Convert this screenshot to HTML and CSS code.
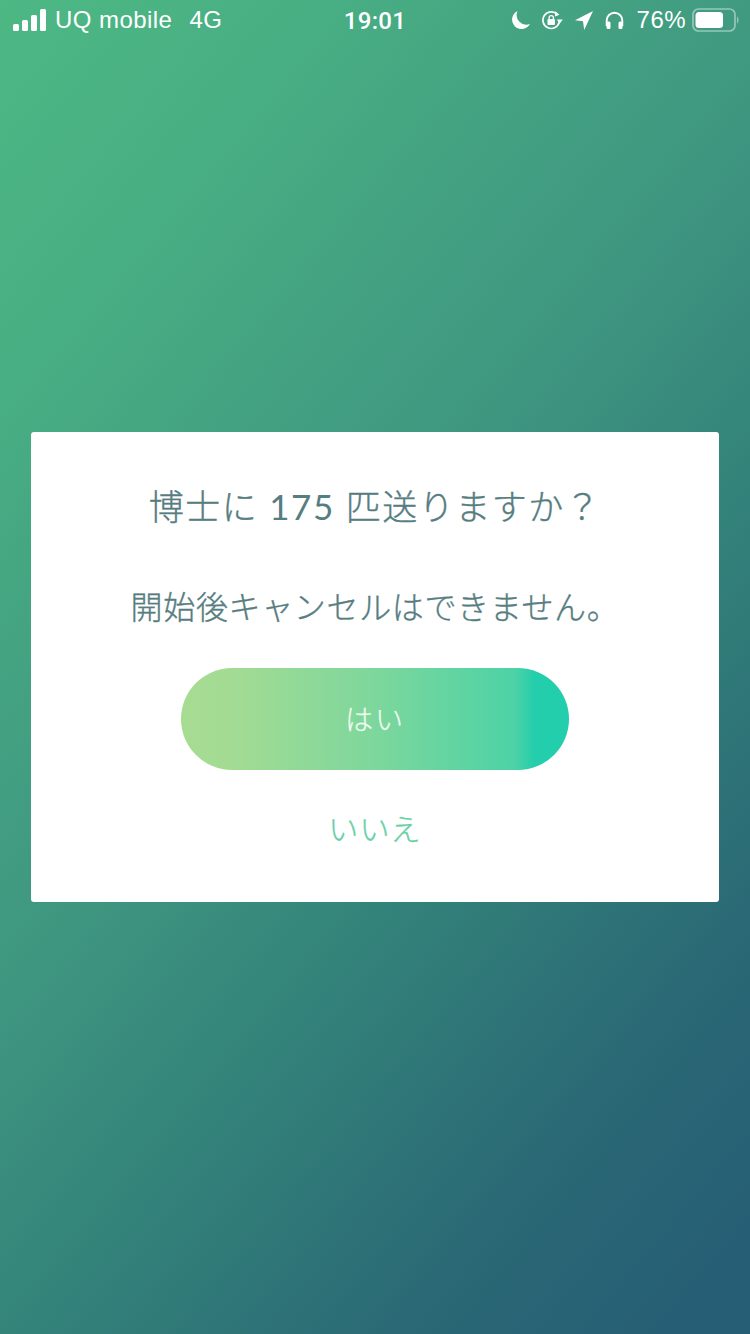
FILE: index.html
```html
<!DOCTYPE html>
<html lang="ja">
<head>
<meta charset="utf-8">
<title>確認</title>
<link rel="stylesheet" href="styles.css">
</head>
<body>
<div class="status">
  <div class="status-left">
    <svg class="signal" width="34" height="22" viewBox="0 0 34 22"><rect x="0" y="15" width="6" height="7" rx="1.5"/><rect x="9" y="11" width="6" height="11" rx="1.5"/><rect x="18" y="6" width="6" height="16" rx="1.5"/><rect x="27" y="0" width="6" height="22" rx="1.5"/></svg>
    <span class="carrier">UQ mobile</span>
    <span class="net">4G</span>
  </div>
  <div class="status-time">19:01</div>
  <div class="status-right">
    <svg width="19" height="19" viewBox="0 0 19 19"><path d="M6.500 0A9.500 9.500 0 1 0 19 13 9.800 9.800 0 0 1 6.500 0Z" fill="#fff"/></svg>
    <svg width="21" height="19" viewBox="0 0 21 19"><path d="M15 3.200A8.300 8.300 0 1 0 17.300 11" fill="none" stroke="#fff" stroke-width="1.700"/><path d="M13.200 .2 17.500 3.800 13 5.500Z M14.800 8.600H20.800L17.600 12.800Z" fill="#fff"/><rect x="5.500" y="8" width="7.500" height="6" rx="1" fill="#fff"/><path d="M7.100 8V6.800a2.150 2.150 0 0 1 4.300 0V8" fill="none" stroke="#fff" stroke-width="1.300"/></svg>
    <svg width="18" height="19" viewBox="0 0 18 19"><path d="M18 0 0 9.200 8 10.300 9.200 19Z" fill="#fff"/></svg>
    <svg width="19" height="18" viewBox="0 0 19 18"><path d="M1.700 15V9.500a7.800 7.800 0 0 1 15.600 0V15" fill="none" stroke="#fff" stroke-width="1.900"/><rect x="1.500" y="10.500" width="4" height="7.500" rx="1.500" fill="#fff"/><rect x="13.500" y="10.500" width="4" height="7.500" rx="1.500" fill="#fff"/></svg>
    <span class="pct">76%</span>
    <svg class="battery" width="47" height="24" viewBox="0 0 47 24"><rect x="1" y="1" width="42" height="22" rx="5.500" fill="none" stroke="#fff" stroke-opacity=".45" stroke-width="1.700"/><rect x="3.500" y="4" width="27.500" height="16" rx="3.500" fill="#fff"/><path d="M45 8.500c1 .5 1.500 2 1.500 3.500s-.5 3-1.500 3.500Z" fill="#fff" fill-opacity=".45"/></svg>
  </div>
</div>
<main class="screen">
  <section class="card">
    <h1 class="title">博士に <span class="num">175</span> 匹送りますか？</h1>
    <p class="note">開始後キャンセルはできません。</p>
    <button class="yes" type="button">はい</button>
    <button class="no" type="button">いいえ</button>
  </section>
</main>
</body>
</html>
```
FILE: styles.css
```css
* { box-sizing: border-box; }
html, body { margin: 0; height: 100%; }
body {
  width: 750px;
  height: 1334px;
  overflow: hidden;
  position: relative;
  font-family: Lato, "Noto Sans CJK JP", sans-serif;
  background: linear-gradient(130deg, #4db884 0%, #48ae83 18%, #3f9780 44%, #33827a 62%, #2a6875 82%, #265e75 96%);
}
.status {
  position: absolute;
  top: 0; left: 0; right: 0;
  height: 40px;
  color: #fff;
  font-family: "Liberation Sans", sans-serif;
  font-size: 24px;
  letter-spacing: .45px;
}
.status-left {
  position: absolute;
  left: 13px; top: 0; height: 40px;
  display: flex;
  align-items: center;
}
.signal { fill: #fff; margin-right: 8px; }
.net { margin-left: 17px; }
.status-time {
  position: absolute;
  left: 0; right: 0; top: 0;
  line-height: 42px;
  text-align: center;
  font-weight: 500;
  font-family: Roboto, sans-serif;
  letter-spacing: .3px;
}
.status-right {
  position: absolute;
  right: 11px; top: 0; height: 40px;
  display: flex;
  align-items: center;
  gap: 12px;
}
.pct { margin-left: 1px; }
.battery { margin-left: -6px; }
.screen {
  height: 1334px;
  display: flex;
  align-items: center;
  justify-content: center;
}
.card {
  width: 688px;
  height: 470px;
  background: #fff;
  border-radius: 3px;
  display: flex;
  flex-direction: column;
  align-items: center;
}
.title {
  margin: 50px 0 0;
  font-size: 35px;
  line-height: 48px;
  font-weight: 300;
  letter-spacing: 1.5px;
  color: #567d80;
  -webkit-text-stroke: .35px #567d80;
  white-space: pre;
}
.num { font-weight: 400; -webkit-text-stroke: 0; }
.note {
  margin: 52px 0 0;
  font-size: 32px;
  line-height: 50px;
  font-weight: 300;
  letter-spacing: .65px;
  color: #567d80;
  -webkit-text-stroke: .35px #567d80;
}
.yes {
  margin-top: 36px;
  width: 388px;
  height: 102px;
  padding: 0 0 3px;
  border: 0;
  border-radius: 51px;
  font: inherit;
  font-size: 28px;
  font-weight: 300;
  letter-spacing: 2px;
  color: #f2fbf2;
  -webkit-text-stroke: .25px #f2fbf2;
  background: linear-gradient(90deg, #a6dc92 0%, #a4db93 12%, #7dd79c 50%, #4dd2a6 86%, #24ceac 91%, #22cead 100%);
}
.no {
  margin-top: 37px;
  padding: 0;
  border: 0;
  background: none;
  font: inherit;
  font-size: 30px;
  font-weight: 300;
  line-height: 42px;
  letter-spacing: 1.200px;
  color: #67d0a6;
  -webkit-text-stroke: .3px #67d0a6;
}
```
